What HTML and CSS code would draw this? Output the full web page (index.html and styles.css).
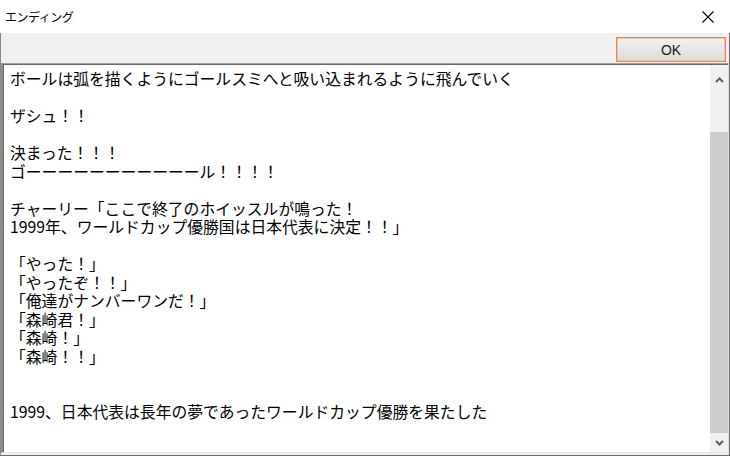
FILE: index.html
```html
<!DOCTYPE html>
<html lang="ja">
<head>
  <meta charset="UTF-8" />
  <title>エンディング</title>
  <link rel="stylesheet" href="styles.css">
</head>
<body>
  <div class="dialog">
    <div class="title-bar">
      <span class="title">エンディング</span>
      <svg class="close" viewBox="0 0 12 12" xmlns="http://www.w3.org/2000/svg" aria-label="Close">
        <path d="M0.5 0.5L11.5 11.5M11.5 0.5L0.5 11.5" stroke="#000" stroke-width="1.1" fill="none"/>
      </svg>
    </div>

    <div class="dialog-body">
      <!-- button row -->
      <div class="toolbar">
        <button class="ok-button">OK</button>
      </div>

      <!-- message box with scrollbar -->
      <div class="textbox">
        <div class="text">ボールは弧を描くようにゴールスミへと吸い込まれるように飛んでいく

ザシュ！！

決まった！！！
ゴーーーーーーーーーーール！！！！

チャーリー「ここで終了のホイッスルが鳴った！
1999年、ワールドカップ優勝国は日本代表に決定！！」

「やった！」
「やったぞ！！」
「俺達がナンバーワンだ！」
「森崎君！」
「森崎！」
「森崎！！」


1999、日本代表は長年の夢であったワールドカップ優勝を果たした</div>
        <div class="scrollbar">
          <div class="arrow arrow-up">
            <svg viewBox="0 0 9 6" xmlns="http://www.w3.org/2000/svg"><path d="M1 5L4.5 1.5L8 5" stroke="#606060" stroke-width="2" fill="none"/></svg>
          </div>
          <div class="track">
            <div class="thumb"></div>
          </div>
          <div class="arrow arrow-down">
            <svg viewBox="0 0 9 6" xmlns="http://www.w3.org/2000/svg"><path d="M1 1L4.5 4.5L8 1" stroke="#606060" stroke-width="2" fill="none"/></svg>
          </div>
        </div>
      </div>
    </div>
  </div>
</body>
</html>
```

FILE: styles.css
```css
* { box-sizing: border-box; }
body {
  margin: 0;
  background: #ffffff;
  font-family: "Noto Sans CJK JP", "Noto Sans", sans-serif;
  color: #000;
}
.dialog {
  width: 730px;
  height: 456px;
  display: flex;
  flex-direction: column;
}

.title-bar {
  height: 33px;
  display: flex;
  align-items: center;
  justify-content: space-between;
  padding: 0 16px 0 5px;
  background: #ffffff;
}
.title {
  font-size: 12px;
  letter-spacing: -0.5px;
}
.close {
  width: 12px;
  height: 12px;
}

.dialog-body {
  flex: 1;
  display: flex;
  flex-direction: column;
  border-left: 1px solid #8a8a8a;
  border-right: 1px solid #6a6a6a;
  border-bottom: 1px solid #6a6a6a;
  background: #f0f0f0;
  min-height: 0;
}

.toolbar {
  height: 30px;
  display: flex;
  justify-content: flex-end;
  align-items: flex-start;
  padding: 4px 3px 0 0;
}
.ok-button {
  width: 110px;
  height: 25px;
  border: 1px solid #e0885a;
  box-shadow: inset 0 0 0 1px #f3c2a6;
  background: linear-gradient(#f2f2f2, #dcdcdc);
  font-family: "Liberation Sans", sans-serif;
  font-size: 14px;
  color: #1a1a1a;
  padding: 0;
}

.textbox {
  flex: 1;
  display: flex;
  min-height: 0;
  margin-bottom: 2px;
  background: #ffffff;
  border-top: 1px solid #a0a0a0;
  border-left: 2px solid #8c8c8c;
  border-right: 1px solid #e3e3e3;
  border-bottom: 1px solid #e3e3e3;
  box-shadow: inset 1px 1px 0 #696969;
}
.text {
  flex: 1;
  padding: 6px 0 0 7px;
  white-space: pre;
  font-size: 15.8px;
  line-height: 18.5px;
  overflow: hidden;
}

.scrollbar {
  width: 18px;
  display: flex;
  flex-direction: column;
  background: #f0f0f0;
  margin-top: 1px;
}
.arrow {
  display: flex;
  align-items: center;
  justify-content: center;
}
.arrow svg {
  width: 9px;
  height: 6px;
}
.arrow-up { height: 29px; }
.arrow-down { height: 19px; }
.track {
  flex: 1;
  display: flex;
  flex-direction: column;
  padding-top: 38px;
}
.thumb {
  flex: 1;
  background: #cdcdcd;
}
```
